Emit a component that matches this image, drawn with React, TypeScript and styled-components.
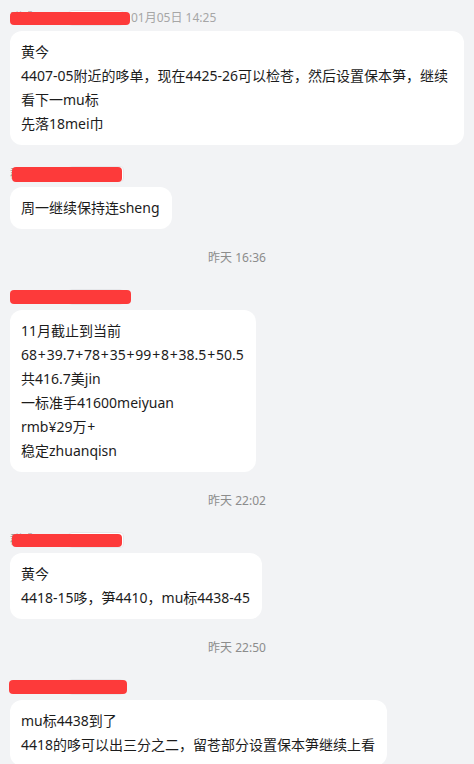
import React from "react";
import styled, { createGlobalStyle } from "styled-components";

const GlobalStyle = createGlobalStyle`
  html, body {
    margin: 0;
    padding: 0;
    background: #f2f3f5;
  }
  body {
    font-family: "Noto Sans", "Noto Sans CJK SC", sans-serif;
    color: #1c1c1c;
  }
`;

const Page = styled.div`
  display: flex;
  flex-direction: column;
  align-items: flex-start;
  gap: 19px;
  padding: 8px 10px 20px;
`;

const Group = styled.div`
  display: flex;
  flex-direction: column;
  align-items: flex-start;
  gap: 3px;
  max-width: 456px;
`;

const Header = styled.div`
  position: relative;
  display: flex;
  align-items: center;
  height: 20px;
  font-size: 12px;
  line-height: 20px;
`;

const Name = styled.span`
  width: 58px;
  color: #9a9a9a;
  overflow: hidden;
  white-space: nowrap;
`;

const Tag = styled.span`
  box-sizing: border-box;
  width: 56px;
  height: 16px;
  border: 1px solid #e6e7ea;
  border-radius: 4px;
  background: #ffffff;
`;

const Time = styled.span`
  margin-left: 7px;
  color: #a6a6a6;
`;

const Redact = styled.div<{ $left: number; $width: number; $top: number; $height: number }>`
  position: absolute;
  left: ${({ $left }) => $left}px;
  top: ${({ $top }) => $top}px;
  width: ${({ $width }) => $width}px;
  height: ${({ $height }) => $height}px;
  border-radius: 4px;
  background: #fd3a3a;
`;

const Bubble = styled.div`
  box-sizing: border-box;
  max-width: 456px;
  padding: 9px 12px 9px 11px;
  border-radius: 12px;
  background: #ffffff;
  font-size: 14px;
  line-height: 24px;
`;

const Line = styled.div`
  white-space: pre-wrap;
  word-break: break-all;
`;

// the chat font draws "+" a bit wider than Noto Sans does
const Plus = styled.span`
  margin: 0 0.8px;
`;

const Stamp = styled.div`
  align-self: stretch;
  height: 20px;
  line-height: 20px;
  text-align: center;
  font-size: 12px;
  color: #8c8c8c;
`;

const renderText = (text: string) =>
  text.split("+").map((part, i) => (
    <React.Fragment key={i}>
      {i > 0 && <Plus>+</Plus>}
      {part}
    </React.Fragment>
  ));

interface MessageProps {
  lines: string[];
  time?: string;
  bar: { left: number; width: number; top: number; height: number };
}

const Message = ({ lines, time, bar }: MessageProps) => (
  <Group>
    <Header>
      <Name>群成员</Name>
      <Tag />
      {time && <Time>{time}</Time>}
      <Redact $left={bar.left} $width={bar.width} $top={bar.top} $height={bar.height} />
    </Header>
    <Bubble>
      {lines.map((l, i) => (
        <Line key={i}>{renderText(l)}</Line>
      ))}
    </Bubble>
  </Group>
);

const App = () => {
  return (
    <>
      <GlobalStyle />
      <Page>
        <Message
          time="01月05日 14:25"
          bar={{ left: 0, width: 120, top: 4, height: 13 }}
          lines={[
            "黄今",
            "4407-05附近的哆单，现在4425-26可以检苍，然后设置保本笋，继续看下一mu标",
            "先落18mei巾",
          ]}
        />
        <Message
          bar={{ left: 2, width: 110, top: 3, height: 15 }}
          lines={["周一继续保持连sheng"]}
        />
        <Stamp>昨天 16:36</Stamp>
        <Message
          bar={{ left: 0, width: 121, top: 3, height: 14 }}
          lines={[
            "11月截止到当前",
            "68+39.7+78+35+99+8+38.5+50.5",
            "共416.7美jin",
            "一标准手41600meiyuan",
            "rmb¥29万+",
            "稳定zhuanqisn",
          ]}
        />
        <Stamp>昨天 22:02</Stamp>
        <Message
          bar={{ left: 2, width: 110, top: 4, height: 13 }}
          lines={["黄今", "4418-15哆，笋4410，mu标4438-45"]}
        />
        <Stamp>昨天 22:50</Stamp>
        <Message
          bar={{ left: -1, width: 118, top: 3, height: 14 }}
          lines={["mu标4438到了", "4418的哆可以出三分之二，留苍部分设置保本笋继续上看"]}
        />
      </Page>
    </>
  );
};

export default App;
